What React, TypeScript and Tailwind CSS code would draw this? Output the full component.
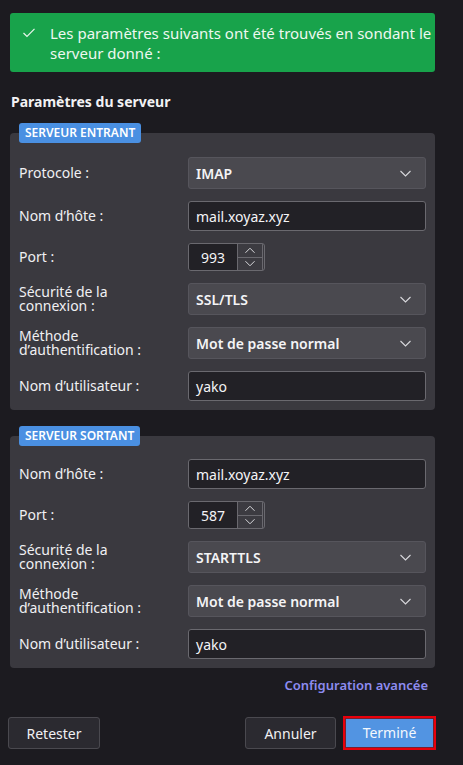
import React from 'react';

const font = { fontFamily: '"Noto Sans", "Open Sans", sans-serif' };

function Chevron({ up = false, className = '' }: { up?: boolean; className?: string }) {
  return (
    <svg width="11" height="7" viewBox="0 0 11 7" className={className} fill="none">
      <polyline
        points={up ? '0.5,6 5.5,1 10.5,6' : '0.5,1 5.5,6 10.5,1'}
        stroke="#d8d8dc"
        strokeWidth="1.1"
      />
    </svg>
  );
}

function Select({ value }: { value: string }) {
  return (
    <div className="flex-1 h-[32px] rounded-[3px] border border-[#56555c] bg-[#4a494f] flex items-center justify-between pl-[7px] pr-[14px]">
      <span className="text-[14px] font-semibold text-[#f4f4f6]">{value}</span>
      <Chevron />
    </div>
  );
}

function TextInput({ value }: { value: string }) {
  return (
    <div className="flex-1 h-[30px] rounded-[3px] border border-[#6a696f] bg-[#222126] flex items-center pl-[7px]">
      <span className="text-[14px] text-[#f4f4f6]">{value}</span>
    </div>
  );
}

function Spin({ value }: { value: string }) {
  return (
    <div className="h-[28px] w-[77px] flex rounded-[3px] border border-[#6a696f] overflow-hidden">
      <div className="w-[48px] bg-[#222126] flex items-center justify-center text-[14px] text-[#f4f4f6]">
        {value}
      </div>
      <div className="w-[26px] flex flex-col border-l border-[#6a696f] border-r bg-[#3c3b41]">
        <div className="flex-1 flex items-center justify-center border-b border-[#6a696f]">
          <Chevron up className="w-[10px]" />
        </div>
        <div className="flex-1 flex items-center justify-center">
          <Chevron className="w-[10px]" />
        </div>
      </div>
    </div>
  );
}

function Row({ label, children }: { label: React.ReactNode; children: React.ReactNode }) {
  return (
    <div className="flex items-center">
      <div className="w-[169px] text-[14px] leading-[14px] text-[#f0f0f3]">{label}</div>
      {children}
    </div>
  );
}

function ServerPanel({
  title,
  rows,
  padTop,
}: {
  title: string;
  rows: React.ReactNode;
  padTop: string;
}) {
  return (
    <div className="flex flex-col">
      <div className="relative z-10 ml-[9px] mb-[-10px] w-fit rounded-[3px] bg-[#4a90e2] px-[6px] h-[20px] leading-[20px] text-[12px] font-semibold text-white">
        {title}
      </div>
      <div className={`rounded-[4px] bg-[#3a393f] px-[9px] pb-[9px] flex flex-col gap-[12px] ${padTop}`}>
        {rows}
      </div>
    </div>
  );
}

export default function App() {
  return (
    <div className="min-h-[765px] w-[463px] bg-[#1c1b20] pt-[13px]" style={font}>
      <div className="ml-[10px] w-[425px]">
        {/* Banner */}
        <div className="flex rounded-[3px] bg-[#18a34b] pt-[10px] pb-[9px] pl-[13px] h-[59px]">
          <svg width="12" height="10" viewBox="0 0 12 10" className="mt-[5px] shrink-0" fill="none">
            <polyline points="0.5,5 4,8.5 11.5,0.8" stroke="#e9f6ec" strokeWidth="1.2" />
          </svg>
          <p className="ml-[15px] text-[15px] leading-[20px] text-[#eef8f0]">
            Les paramètres suivants ont été trouvés en sondant le serveur donné :
          </p>
        </div>

        <h2 className="mt-[20px] ml-[1px] text-[14px] leading-[20px] font-bold text-[#f2f2f4]">
          Paramètres du serveur
        </h2>

        <div className="mt-[11px]">
          <ServerPanel
            title="SERVEUR ENTRANT"
            padTop="pt-[24px]"
            rows={
              <>
                <Row label="Protocole :">
                  <Select value="IMAP" />
                </Row>
                <Row label="Nom d’hôte :">
                  <TextInput value="mail.xoyaz.xyz" />
                </Row>
                <Row label="Port :">
                  <Spin value="993" />
                </Row>
                <Row label={<>Sécurité de la<br />connexion :</>}>
                  <Select value="SSL/TLS" />
                </Row>
                <Row label={<>Méthode<br />d’authentification :</>}>
                  <Select value="Mot de passe normal" />
                </Row>
                <Row label="Nom d’utilisateur :">
                  <TextInput value="yako" />
                </Row>
              </>
            }
          />
        </div>

        <div className="mt-[16px]">
          <ServerPanel
            title="SERVEUR SORTANT"
            padTop="pt-[23px]"
            rows={
              <>
                <Row label="Nom d’hôte :">
                  <TextInput value="mail.xoyaz.xyz" />
                </Row>
                <Row label="Port :">
                  <Spin value="587" />
                </Row>
                <Row label={<>Sécurité de la<br />connexion :</>}>
                  <Select value="STARTTLS" />
                </Row>
                <Row label={<>Méthode<br />d’authentification :</>}>
                  <Select value="Mot de passe normal" />
                </Row>
                <Row label="Nom d’utilisateur :">
                  <TextInput value="yako" />
                </Row>
              </>
            }
          />
        </div>

        <div className="mt-[7px] flex justify-end pr-[7px]">
          <span className="text-[13px] leading-[20px] font-semibold text-[#8e8cf0]">
            Configuration avancée
          </span>
        </div>
      </div>

      {/* Footer buttons */}
      <div className="mt-[21px] flex items-center pl-[8px] w-[436px]">
        <button className="h-[32px] w-[92px] rounded-[3px] border border-[#4a494f] bg-[#2b2a30] text-[14px] text-[#f0f0f3]">
          Retester
        </button>
        <div className="flex-1" />
        <button className="h-[32px] w-[91px] rounded-[3px] border border-[#4a494f] bg-[#2b2a30] text-[14px] text-[#f0f0f3]">
          Annuler
        </button>
        <button className="ml-[7px] h-[34px] w-[93px] border-2 border-[#e8000b] bg-[#5294e2] text-[14px] text-[#f4f8fd]">
          <span className="block h-full w-full border border-[#7a2030] leading-[28px]">Terminé</span>
        </button>
      </div>
    </div>
  );
}
